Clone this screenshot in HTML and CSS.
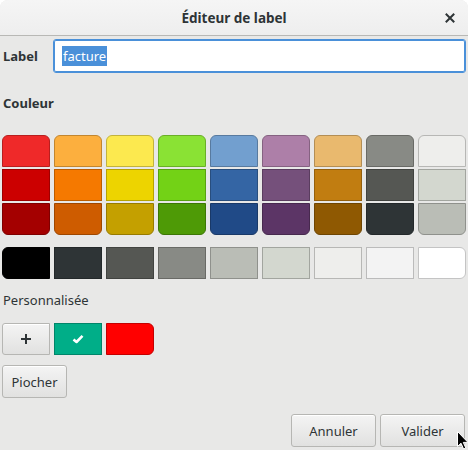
FILE: index.html
```html
<!DOCTYPE html>
<html lang="fr">
<head>
<meta charset="utf-8">
<title>Éditeur de label</title>
<link rel="stylesheet" href="styles.css">
</head>
<body>
<div class="window">
  <header class="titlebar">
    <span class="title">Éditeur de label</span>
    <span class="close">
      <svg width="10" height="10" viewBox="0 0 10 10"><path d="M1.5 1.5 L8.5 8.5 M8.5 1.5 L1.5 8.5" stroke="#2e3436" stroke-width="2" stroke-linecap="square"/></svg>
    </span>
  </header>
  <main class="content">
    <div class="label-row">
      <span class="label-text">Label</span>
      <div class="entry"><span class="sel">facture</span></div>
    </div>
    <div class="heading">Couleur</div>
    <div class="palette">
      <div class="sw r1 c1" style="background:#ef2929;border-color:#b81f1f"></div>
      <div class="sw r1" style="background:#fcaf3e;border-color:#c2862f"></div>
      <div class="sw r1" style="background:#fce94f;border-color:#c2b33d"></div>
      <div class="sw r1" style="background:#8ae234;border-color:#6aae28"></div>
      <div class="sw r1" style="background:#729fcf;border-color:#587a9f"></div>
      <div class="sw r1" style="background:#ad7fa8;border-color:#856281"></div>
      <div class="sw r1" style="background:#e9b96e;border-color:#b38e55"></div>
      <div class="sw r1" style="background:#888a85;border-color:#696a66"></div>
      <div class="sw r1" style="background:#eeeeec;border-color:#b7b7b5"></div>

      <div class="sw" style="background:#cc0000;border-color:#9d0000"></div>
      <div class="sw" style="background:#f57900;border-color:#bc5d00"></div>
      <div class="sw" style="background:#edd400;border-color:#b6a300"></div>
      <div class="sw" style="background:#73d216;border-color:#58a111"></div>
      <div class="sw" style="background:#3465a4;border-color:#284e7e"></div>
      <div class="sw" style="background:#75507b;border-color:#5a3d5f"></div>
      <div class="sw" style="background:#c17d11;border-color:#94600d"></div>
      <div class="sw" style="background:#555753;border-color:#414340"></div>
      <div class="sw" style="background:#d3d7cf;border-color:#a2a59f"></div>

      <div class="sw r3" style="background:#a40000;border-color:#7e0000"></div>
      <div class="sw r3" style="background:#ce5c00;border-color:#9e4700"></div>
      <div class="sw r3" style="background:#c4a000;border-color:#977b00"></div>
      <div class="sw r3" style="background:#4e9a06;border-color:#3c7605"></div>
      <div class="sw r3" style="background:#204a87;border-color:#193968"></div>
      <div class="sw r3" style="background:#5c3566;border-color:#47294e"></div>
      <div class="sw r3" style="background:#8f5902;border-color:#6e4502"></div>
      <div class="sw r3" style="background:#2e3436;border-color:#23282a"></div>
      <div class="sw r3" style="background:#babdb6;border-color:#8f918c"></div>
    </div>
    <div class="grays">
      <div class="sw gl" style="background:#000000;border-color:#000000"></div>
      <div class="sw" style="background:#2e3436;border-color:#23282a"></div>
      <div class="sw" style="background:#555753;border-color:#414340"></div>
      <div class="sw" style="background:#888a85;border-color:#696a66"></div>
      <div class="sw" style="background:#babdb6;border-color:#8f918c"></div>
      <div class="sw" style="background:#d3d7cf;border-color:#a2a59f"></div>
      <div class="sw" style="background:#eeeeec;border-color:#b7b7b5"></div>
      <div class="sw" style="background:#f3f3f3;border-color:#bbbbbb"></div>
      <div class="sw gr" style="background:#ffffff;border-color:#c4c4c4"></div>
    </div>
    <div class="subheading">Personnalisée</div>
    <div class="custom">
      <button class="btn add">
        <svg width="12" height="12" viewBox="0 0 12 12"><path d="M6 1 V11 M1 6 H11" stroke="#2e3436" stroke-width="2"/></svg>
      </button>
      <div class="sw selected" style="background:#00ae88;border-color:#00856a">
        <svg width="12" height="10" viewBox="0 0 12 10"><path d="M1.5 5.5 L4.5 8 L10.5 1.8" stroke="#ffffff" stroke-width="2.6" fill="none" stroke-linejoin="round"/></svg>
      </div>
      <div class="sw gr" style="background:#ff0000;border-color:#c40000"></div>
    </div>
    <div class="pick-row"><button class="btn pick">Piocher</button></div>
    <div class="actions">
      <button class="btn action">Annuler</button>
      <button class="btn action">Valider</button>
    </div>
  </main>
  <svg class="cursor" width="12" height="19" viewBox="0 0 12 19"><path d="M0.5 0.5 L0.5 15.5 L4 12.2 L6.6 18 L8.8 17 L6.3 11.4 L11 11.4 Z" fill="#000" stroke="#fff" stroke-width="1"/></svg>
</div>
</body>
</html>
```
FILE: styles.css
```css
* { box-sizing: border-box; }
html, body { margin: 0; padding: 0; }
body {
  width: 468px;
  height: 450px;
  background: #ffffff;
  font-family: "Noto Sans", "DejaVu Sans", sans-serif;
  font-size: 13px;
  color: #2e3436;
  overflow: hidden;
}
.window {
  position: relative;
  width: 468px;
  height: 450px;
  background: #e8e8e7;
  border-radius: 8px 8px 0 0;
  overflow: hidden;
}
.titlebar {
  height: 36px;
  background: linear-gradient(#f5f5f5, #eeeeee);
  border-bottom: 1px solid #b8b8b5;
  display: flex;
  align-items: center;
  justify-content: center;
  position: relative;
}
.title {
  font-weight: bold;
  font-size: 13.5px;
  color: #2e3436;
  padding-top: 1px;
}
.close {
  position: absolute;
  right: 13px;
  top: 13px;
  width: 10px;
  height: 10px;
  display: flex;
}
.content {
  padding: 3px 2px 0 2px;
}
.label-row {
  display: flex;
  align-items: center;
  height: 34px;
}
.label-text {
  font-weight: bold;
  width: 51px;
  padding-left: 1px;
}
.entry {
  flex: 1;
  height: 34px;
  background: #ffffff;
  border: 1px solid #4a90d9;
  box-shadow: inset 0 0 0 1px #4a90d9;
  border-radius: 3px;
  display: flex;
  align-items: center;
  padding-left: 8px;
}
.sel {
  background: #4a90d9;
  color: #ffffff;
  line-height: 20px;
  padding: 0 1px;
}
.heading {
  font-weight: bold;
  height: 62px;
  padding-top: 21px;
  padding-left: 1px;
}
.palette {
  display: grid;
  grid-template-columns: repeat(9, 48px);
  grid-auto-rows: 32px;
  column-gap: 4px;
  row-gap: 2px;
}
.sw {
  border: 1px solid;
  display: flex;
  align-items: center;
  justify-content: center;
}
.r1 { border-radius: 6px 6px 0 0; }
.r3 { border-radius: 0 0 6px 6px; }
.grays, .custom {
  display: flex;
  gap: 4px;
}
.grays { margin-top: 12px; }
.grays .sw, .custom .sw {
  width: 48px;
  height: 32px;
}
.gl { border-radius: 6px 0 0 6px; }
.gr { border-radius: 0 6px 6px 0; }
.subheading {
  height: 44px;
  padding-top: 12px;
  padding-left: 1px;
}
.btn {
  font-family: inherit;
  font-size: 13px;
  color: #2e3436;
  background: linear-gradient(#f4f4f4, #e1e1e0);
  border: 1px solid #b6b6b3;
  border-radius: 3px;
  box-shadow: inset 0 1px #ffffff;
  padding: 0;
}
.add {
  width: 48px;
  height: 32px;
  border-radius: 3px 0 0 3px;
  display: flex;
  align-items: center;
  justify-content: center;
}
.pick-row { margin-top: 10px; }
.pick {
  width: 65px;
  height: 33px;
}
.actions {
  display: flex;
  justify-content: flex-end;
  gap: 4px;
  margin-top: 16px;
  padding-right: 1px;
}
.action {
  width: 85px;
  height: 33px;
}
.cursor {
  position: absolute;
  left: 457px;
  top: 431px;
}
```
